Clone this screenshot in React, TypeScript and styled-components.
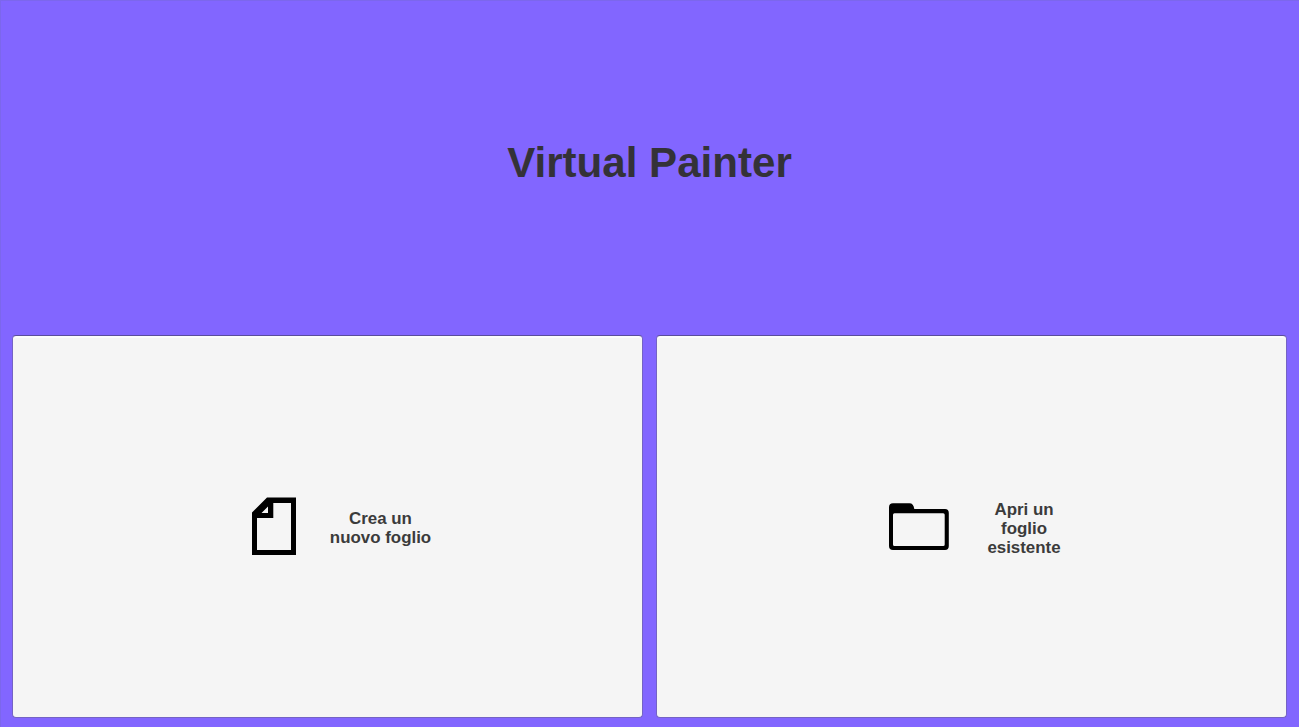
import React from "react";
import styled, { createGlobalStyle } from "styled-components";

const GlobalStyle = createGlobalStyle`
  * { box-sizing: border-box; }
  body { margin: 0; background: #8266ff; }
`;

const Page = styled.main`
  display: grid;
  grid-template-rows: 334px 1fr;
  height: 100vh;
  min-height: 727px;
  background: #8266ff;
  border-top: 1px solid #7c67ec;
  border-left: 1px solid #7c67ec;
  font-family: "Liberation Sans", Arial, sans-serif;
  font-weight: 700;
`;

const Header = styled.header`
  display: flex;
  align-items: center;
  justify-content: center;
  padding: 0 1px 10px 0;
`;

const Title = styled.h1`
  margin: 0;
  font-size: 42.1px;
  line-height: 50px;
  color: #343238;
`;

const Actions = styled.section`
  display: grid;
  grid-template-columns: 1fr 1fr;
  gap: 13px;
  padding: 0 12px 9px 11px;
`;

const ActionButton = styled.button<{ $gap: number; $shift: number }>`
  display: flex;
  align-items: center;
  justify-content: center;
  gap: ${(p) => p.$gap}px;
  padding: 0 0 0 ${(p) => p.$shift}px;
  border: 1px solid #7463c4;
  border-top-color: #5a4d9c;
  border-radius: 4px;
  background: #f5f5f5;
  box-shadow: inset 0 2px 0 #fcfcfc;
  font: inherit;
  color: #3b3b3b;
`;

const Label = styled.span<{ $width: number }>`
  width: ${(p) => p.$width}px;
  padding-top: 3px;
  font-size: 16.9px;
  line-height: 19px;
  text-align: center;
  white-space: pre-line;
`;

const Icon = styled.svg`
  display: block;
  flex: none;
  margin-bottom: 2px;
`;

const SheetIcon = () => (
  <Icon width="44" height="58" viewBox="0 0 44 58">
    <path
      fillRule="evenodd"
      d="M15 .5H44V58H0V15.500ZM21.300 6V21H5V53H39V6ZM16 9.500 9.500 16H16Z"
    />
  </Icon>
);

const FolderIcon = () => (
  <Icon width="60" height="48" viewBox="0 0 60 48">
    <path
      fillRule="evenodd"
      d="M4 1.300H20.500Q24.500 1.300 25.300 7H56Q59.800 7 59.800 11V44Q59.800 48 56 48H4Q0 48 0 44V5.300Q0 1.300 4 1.300ZM5.500 11.300Q4 11.300 4 12.800V42.500Q4 44 5.500 44H54.200Q55.700 44 55.700 42.500V12.800Q55.700 11.300 54.200 11.300Z"
    />
  </Icon>
);

export default function App() {
  return (
    <>
      <GlobalStyle />
      <Page>
        <Header>
          <Title>Virtual Painter</Title>
        </Header>
        <Actions>
          <ActionButton type="button" $gap={33} $shift={29}>
            <SheetIcon />
            <Label $width={104}>{"Crea un\nnuovo foglio"}</Label>
          </ActionButton>
          <ActionButton type="button" $gap={37} $shift={8}>
            <FolderIcon />
            <Label $width={76}>{"Apri un\nfoglio\nesistente"}</Label>
          </ActionButton>
        </Actions>
      </Page>
    </>
  );
}
